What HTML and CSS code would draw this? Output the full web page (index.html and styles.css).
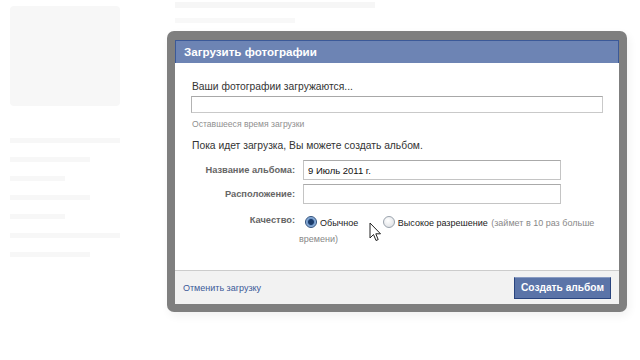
FILE: index.html
```html
<!DOCTYPE html>
<html lang="ru">
<head>
    <meta charset="UTF-8">
    <meta name="viewport" content="width=device-width, initial-scale=1.0">
    <title>Загрузить фотографии</title>
    <link rel="stylesheet" href="styles.css">
</head>
<body>

<div class="page">
    <div class="side">
        <div class="photo"></div>
        <div class="side-line wide"></div>
        <div class="side-line"></div>
        <div class="side-line short"></div>
        <div class="side-line"></div>
        <div class="side-line short"></div>
        <div class="side-line wide"></div>
        <div class="side-line"></div>
    </div>
    <div class="main">
        <div class="name-line"></div>
        <div class="sub-line"></div>
    </div>
</div>

<div class="dialog">
    <div class="dialog-inner">
        <div class="dialog-title">Загрузить фотографии</div>
        <div class="dialog-body">
            <div class="status">Ваши фотографии загружаются...</div>
            <div class="progress"></div>
            <div class="hint">Оставшееся время загрузки</div>

            <div class="note">Пока идет загрузка, Вы можете создать альбом.</div>

            <div class="form">
                <label class="form-label">Название альбома:</label>
                <div class="field"><input class="text-input" type="text" value="9 Июль 2011 г."></div>

                <label class="form-label">Расположение:</label>
                <div class="field"><input class="text-input" type="text"></div>

                <label class="form-label top">Качество:</label>
                <div class="quality">
                    <span class="radio checked"></span><span class="opt">Обычное</span>
                    <span class="radio"></span><span class="opt last">Высокое разрешение</span>
                    <span class="muted">(займет в 10 раз больше</span>
                    <span class="muted">времени)</span>
                </div>
            </div>
        </div>
        <div class="dialog-footer">
            <a class="cancel" href="#">Отменить загрузку</a>
            <button class="create">Создать альбом</button>
        </div>
    </div>
</div>

<svg class="cursor" width="13" height="20" viewBox="0 0 13 20">
    <path d="M1 1 L1 16 L4.5 12.5 L7 18.5 L9.2 17.6 L6.8 11.8 L11.5 11.8 Z" fill="#fff" stroke="#222" stroke-width="1" stroke-linejoin="round"/>
</svg>

</body>
</html>
```

FILE: styles.css
```css
body {
    margin: 0;
    width: 640px;
    height: 360px;
    overflow: hidden;
    background-color: #fff;
    font-family: "Liberation Sans", Arial, sans-serif;
    font-size: 10.3px;
    color: #333;
}

/* faded page behind the dialog */
.page {
    display: flex;
    gap: 30px;
    height: 360px;
}
.side {
    width: 135px;
    padding: 6px 0 0 10px;
    display: flex;
    flex-direction: column;
    gap: 14px;
}
.photo {
    width: 110px;
    height: 100px;
    margin-bottom: 18px;
    background-color: #f7f7f7;
    border-radius: 4px;
}
.side-line {
    width: 80px;
    height: 5px;
    background-color: #f7f7f7;
}
.side-line.wide {
    width: 110px;
}
.side-line.short {
    width: 55px;
}
.main {
    padding-top: 2px;
    display: flex;
    flex-direction: column;
    gap: 10px;
}
.name-line {
    width: 200px;
    height: 6px;
    background-color: #f6f6f6;
}
.sub-line {
    width: 120px;
    height: 5px;
    background-color: #f8f8f8;
}

/* dialog */
.dialog {
    position: absolute;
    left: 167px;
    top: 31px;
    width: 444px;
    padding: 9px 8px 8px 8px;
    background-color: #7f7f7f;
    border-radius: 7px;
    box-shadow: 2px 4px 10px rgba(0, 0, 0, 0.06);
}
.dialog-inner {
    background-color: #fff;
}
.dialog-title {
    height: 22px;
    line-height: 22px;
    padding-left: 8px;
    background-color: #6d84b4;
    border: 1px solid #3b5998;
    border-bottom: none;
    color: #fff;
    font-size: 11.6px;
    font-weight: bold;
}
.dialog-body {
    padding: 17px 16px 23px 17px;
}
.status {
    line-height: 13px;
}
.progress {
    height: 15px;
    margin: 3px 0 0 -1px;
    border: 1px solid #c9c9c9;
    border-top-color: #a8a8a8;
    border-left-color: #b3b3b3;
    background-color: #fff;
}
.hint {
    margin-top: 6px;
    font-size: 8.6px;
    color: #8f8f8f;
}
.note {
    margin-top: 10px;
    line-height: 13px;
}

.form {
    display: grid;
    grid-template-columns: 103px 1fr;
    column-gap: 4px;
    row-gap: 4px;
    margin-top: 8px;
    align-items: center;
}
.form-label {
    text-align: right;
    font-weight: bold;
    font-size: 9.3px;
    color: #666;
}
.form-label.top {
    align-self: start;
    padding-top: 7px;
}
.field {
    padding-left: 4px;
}
.text-input {
    display: block;
    box-sizing: border-box;
    width: 258px;
    height: 20px;
    margin: 0;
    padding: 2px 4px;
    border: 1px solid #c4c4c4;
    border-top-color: #aaa;
    font-family: "Liberation Sans", Arial, sans-serif;
    font-size: 9.5px;
    color: #111;
}
.quality {
    padding-top: 7px;
    align-self: start;
    font-size: 9px;
    line-height: 16px;
    color: #222;
}
.radio {
    display: inline-block;
    width: 10px;
    height: 10px;
    margin: 0 3px 0 6px;
    vertical-align: -2px;
    border-radius: 50%;
    border: 1px solid #9aa3ad;
    background: radial-gradient(circle at 40% 35%, #fff, #d8dbdf);
}
.radio.checked {
    border-color: #2d4f7c;
    background: radial-gradient(circle, #1b3c6b 0, #1b3c6b 2.5px, #6f97c9 3.5px, #b9d1ee 6px);
}
.opt {
    margin-right: 16px;
}
.opt.last {
    margin-right: 1px;
}
.muted {
    color: #888;
}

.dialog-footer {
    display: flex;
    justify-content: space-between;
    align-items: center;
    height: 33px;
    padding: 0 8px;
    border-top: 1px solid #ccc;
    background-color: #f2f2f2;
}
.cancel {
    color: #3b5998;
    text-decoration: none;
    font-size: 9px;
}
.create {
    height: 22px;
    padding: 0 6px;
    border: 1px solid #29447e;
    border-top-color: #8a9cc2;
    background-color: #5b74a8;
    color: #fff;
    font-family: "Liberation Sans", Arial, sans-serif;
    font-size: 10.2px;
    font-weight: bold;
}

.cursor {
    position: absolute;
    left: 369px;
    top: 222px;
}
```
